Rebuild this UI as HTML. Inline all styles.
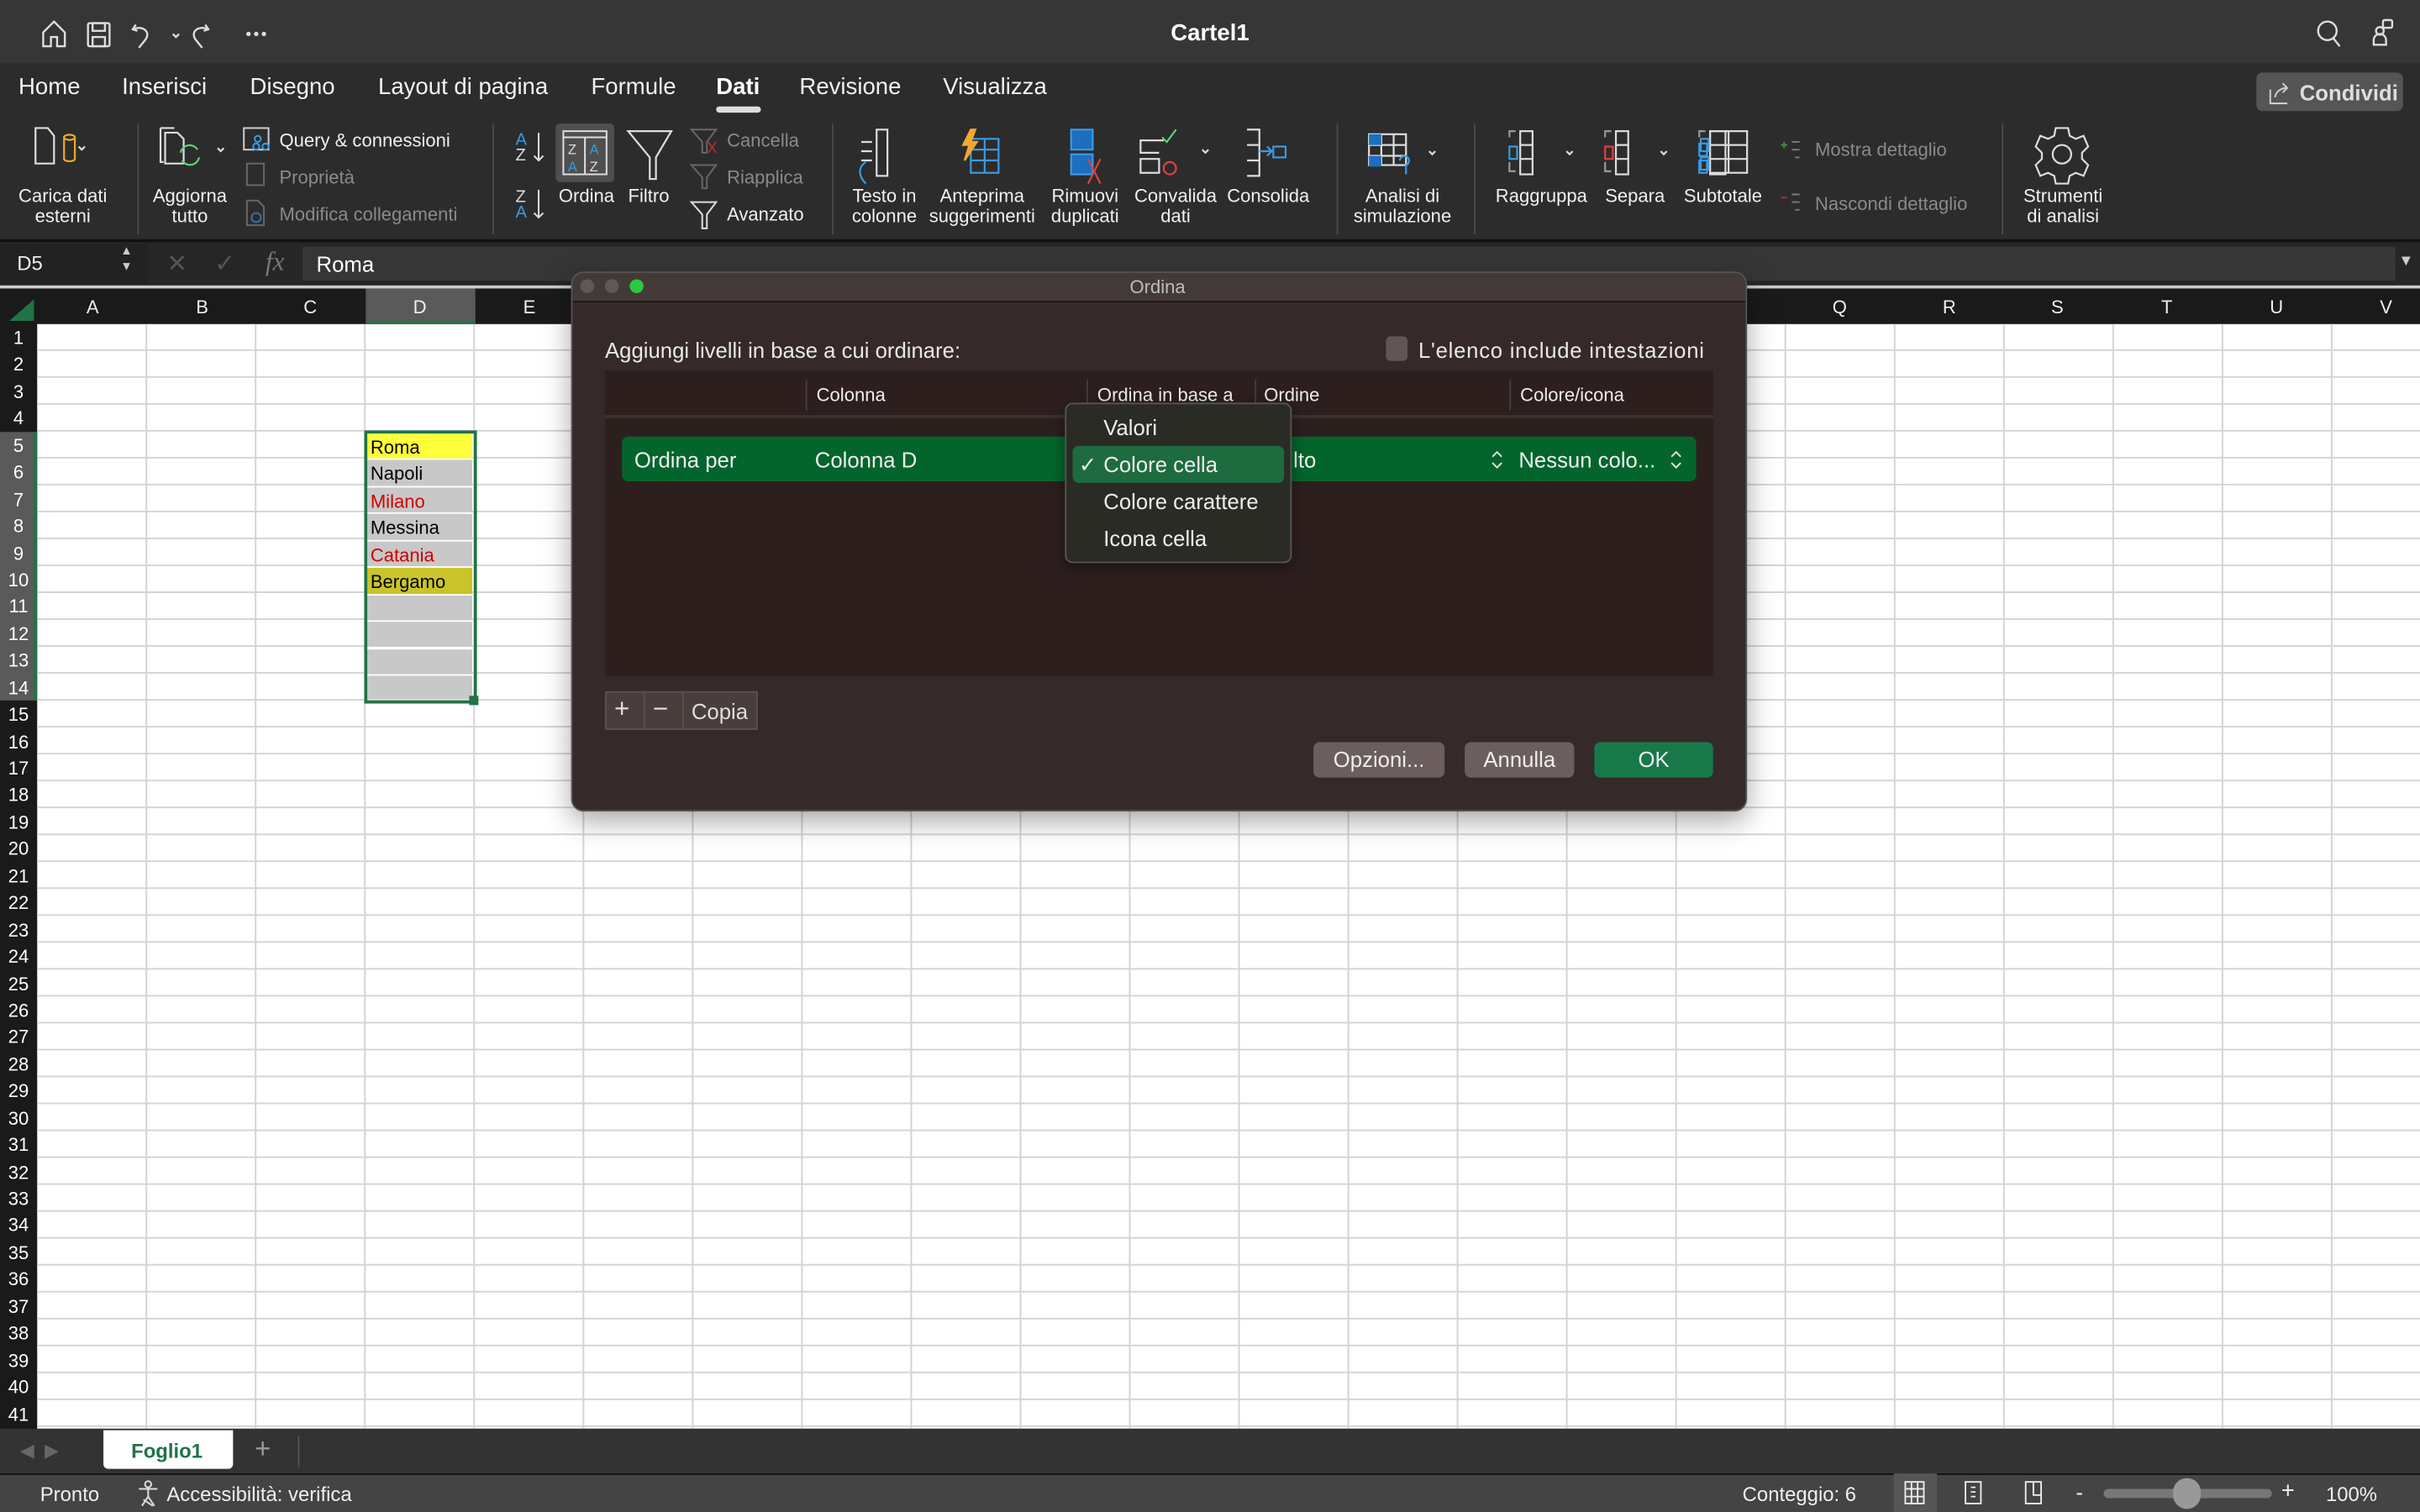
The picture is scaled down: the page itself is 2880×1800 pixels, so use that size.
<!DOCTYPE html>
<html><head><meta charset="utf-8">
<style>
html,body{margin:0;padding:0;width:2880px;height:1800px;overflow:hidden;background:#2c2c2c}
#w{position:absolute;left:0;top:0;width:1568px;height:980px;transform:scale(1.836735);transform-origin:0 0;font-family:"Liberation Sans",sans-serif;color:#eee;overflow:hidden}
.a{position:absolute}
.t{position:absolute;white-space:nowrap}
.rl{font-size:12px;color:#f0f0f0;text-align:center;line-height:13px}
.dim{color:#8a8a8a}
.sep{position:absolute;width:1px;background:#4a4a4a;top:80px;height:72px}
.tab{font-size:15px;top:48px;color:#f2f2f2}
svg{position:absolute;overflow:visible}
.col{position:absolute;top:187px;height:22px;width:70px;text-align:center;font-size:12px;line-height:24px;color:#eee}
#rows div{height:17.44px;line-height:19px;font-size:12px;text-align:center;color:#fff}
.cell{position:absolute;left:238px;width:68px;height:16.4px;font-size:12px;line-height:18px;padding-left:2px;color:#000;box-sizing:border-box}
.btn{position:absolute;background:#6b5e5c;border-radius:4px;font-size:14px;text-align:center;line-height:23px;color:#eee;height:23px}
</style></head><body><div id="w">
<div class="a" style="left:0;top:0;width:1568px;height:41px;background:#363636"></div>
<div class="t" style="left:0;width:1568px;text-align:center;top:13px;font-size:15px;font-weight:bold;color:#fff">Cartel1</div>
<svg style="left:26px;top:12px" width="160" height="20" fill="none" stroke="#ddd" stroke-width="1.3">
<path d="M2 18V9l7-7 7 7v9h-5v-6h-4v6z"/>
<rect x="31" y="3" width="14" height="15" rx="1"/><rect x="34" y="3" width="8" height="5"/><rect x="34" y="12" width="8" height="6"/>
<path d="M62 4l-2 3 3 1M60 7c7-3 12 2 8 7l-4 5"/><path d="M86 10l2 2 2-2"/>
<path d="M107 4l2 3-3 1M109 7c-7-3-12 2-8 7l4 5"/>
<circle cx="135" cy="10" r=".8" fill="#ddd"/><circle cx="140" cy="10" r=".8" fill="#ddd"/><circle cx="145" cy="10" r=".8" fill="#ddd"/>
</svg>
<svg style="left:1500px;top:12px" width="60" height="20" fill="none" stroke="#ddd" stroke-width="1.3">
<circle cx="8" cy="8" r="6"/><path d="M12 13l4 5"/>
<circle cx="42" cy="8" r="2.5"/><rect x="44" y="1" width="6" height="5" rx="1"/><path d="M38 14a4 4 0 0 1 8 0v3h-8z"/>
</svg>
<div class="t tab" style="left:12px">Home</div>
<div class="t tab" style="left:79px">Inserisci</div>
<div class="t tab" style="left:162px">Disegno</div>
<div class="t tab" style="left:245px">Layout di pagina</div>
<div class="t tab" style="left:383px">Formule</div>
<div class="t tab" style="left:464px;font-weight:bold;color:#fff">Dati</div>
<div class="a" style="left:464px;top:69px;width:29px;height:4px;border-radius:2px;background:#ddd"></div>
<div class="t tab" style="left:518px">Revisione</div>
<div class="t tab" style="left:611px">Visualizza</div>
<div class="a" style="left:1462px;top:47px;width:95px;height:25px;border-radius:4px;background:#555"></div>
<div class="t" style="left:1490px;top:52px;font-size:14px;font-weight:bold;color:#ddd">Condividi</div>
<svg style="left:1470px;top:52px" width="16" height="16" fill="none" stroke="#ccc" stroke-width="1.1"><path d="M1 6v9h11M4 11c1-4 4-6 8-6M9 2l3 3-3 3"/></svg>
<div class="sep" style="left:89px"></div><div class="sep" style="left:319px"></div><div class="sep" style="left:539px"></div>
<div class="sep" style="left:866px"></div><div class="sep" style="left:955px"></div><div class="sep" style="left:1297px"></div>
<svg style="left:20px;top:82px" width="50" height="40" fill="none" stroke="#ddd" stroke-width="1.2">
<path d="M3 1h8l4 5v18H3z"/><path d="M31 13l2 2 2-2"/>
<ellipse cx="25" cy="7" rx="3.5" ry="1.7" stroke="#f0a830"/><path d="M21.5 7v14c0 2 7 2 7 0V7" stroke="#f0a830"/>
</svg>
<div class="t rl" style="left:12px;top:121px">Carica dati<br>esterni</div>
<svg style="left:103px;top:82px" width="50" height="40" fill="none" stroke="#ddd" stroke-width="1.2">
<path d="M1 1h9M1 1v22h2M4 4h8l4 4v16H4z"/><path d="M38 14l2 2 2-2"/>
<path d="M14 17a6 6 0 0 1 11-2M26 20a6 6 0 0 1-11 2" stroke="#5ed080"/>
</svg>
<div class="t rl" style="left:99px;top:121px">Aggiorna<br>tutto</div>
<svg style="left:157px;top:82px" width="20" height="64" fill="none" stroke="#ccc" stroke-width="1.1">
<rect x="1" y="1" width="16" height="14"/><circle cx="10" cy="8" r="2" stroke="#3a9ae0"/><circle cx="9" cy="13" r="2" stroke="#3a9ae0"/><circle cx="15" cy="13" r="2" stroke="#3a9ae0"/>
<rect x="3" y="24" width="11" height="14" stroke="#666"/>
<path d="M3 48h7l4 4v12H3z" stroke="#666"/><circle cx="9" cy="59" r="3" stroke="#3a6e9e"/>
</svg>
<div class="t" style="left:181px;top:84px;font-size:12px;color:#f0f0f0">Query &amp; connessioni</div>
<div class="t dim" style="left:181px;top:108px;font-size:12px">Proprietà</div>
<div class="t dim" style="left:181px;top:132px;font-size:12px">Modifica collegamenti</div>
<div class="t" style="left:334px;top:86px;font-size:11px;line-height:10px;color:#3a9ae0">A<br><span style="color:#ddd">Z</span></div>
<div class="t" style="left:334px;top:123px;font-size:11px;line-height:10px;color:#ddd">Z<br><span style="color:#3a9ae0">A</span></div>
<svg style="left:345px;top:86px" width="10" height="60" fill="none" stroke="#ddd" stroke-width="1.1"><path d="M4 0v18M1 15l3 3 3-3M4 37v18M1 52l3 3 3-3"/></svg>
<div class="a" style="left:360px;top:80px;width:38px;height:38px;border-radius:3px;background:#4f4f4f"></div>
<svg style="left:364px;top:84px" width="30" height="32" fill="none" stroke="#ddd" stroke-width="1.1">
<rect x="1" y="1" width="28" height="28"/><path d="M1 5h28M15 5v24"/>
<text x="4" y="16" font-size="9" fill="#ddd" stroke="none" font-family="Liberation Sans">Z</text><text x="18" y="16" font-size="9" fill="#3a9ae0" stroke="none" font-family="Liberation Sans">A</text>
<text x="4" y="27" font-size="9" fill="#3a9ae0" stroke="none" font-family="Liberation Sans">A</text><text x="18" y="27" font-size="9" fill="#ddd" stroke="none" font-family="Liberation Sans">Z</text>
</svg>
<div class="t rl" style="left:362px;top:121px">Ordina</div>
<svg style="left:406px;top:84px" width="32" height="34" fill="none" stroke="#ddd" stroke-width="1.2"><path d="M1 1h28L19 18v14h-4V18z"/></svg>
<div class="t rl" style="left:407px;top:121px">Filtro</div>
<svg style="left:447px;top:83px" width="20" height="66" fill="none" stroke="#666" stroke-width="1.1">
<path d="M1 1h16l-6 8v7h-3V9z"/><path d="M12 9l5 7M17 9l-5 7" stroke="#a03030"/>
<path d="M1 24h16l-6 8v7h-3v-7z"/><path d="M1 48h16l-6 8v9h-3v-9z" stroke="#ddd"/>
</svg>
<div class="t dim" style="left:471px;top:84px;font-size:12px">Cancella</div>
<div class="t dim" style="left:471px;top:108px;font-size:12px">Riapplica</div>
<div class="t" style="left:471px;top:132px;font-size:12px;color:#f0f0f0">Avanzato</div>
<svg style="left:553px;top:83px" width="300" height="40" fill="none" stroke="#ddd" stroke-width="1.2">
<rect x="15" y="1" width="7" height="30"/><path d="M5 9h7M5 15h7M5 21h7"/><path d="M8 22c-6 4-4 10 0 14" stroke="#3a9ae0"/>
<rect x="76" y="7" width="18" height="22" stroke="#3a9ae0"/><path d="M76 14h18M76 21h18M85 7v22" stroke="#3a9ae0"/><path d="M76 1l-5 10h4l-3 10 8-12h-4l3-8z" stroke="#f0a830" fill="#f0a830"/>
<rect x="141" y="1" width="14" height="13" fill="#1c6fc0" stroke="#3a9ae0"/><rect x="141" y="17" width="14" height="13" fill="#1c6fc0" stroke="#3a9ae0"/><path d="M152 20l8 16M160 20l-8 16" stroke="#e04040"/>
<path d="M201 8h-15v8h12M186 20h12v9h-12z"/><path d="M200 6l3 3 6-8" stroke="#5ed080"/><circle cx="205" cy="26" r="4" stroke="#e04040"/><path d="M226 14l2 2 2-2"/>
<path d="M255 1h8v30h-8M255 11h8M255 21h8"/><path d="M263 15h8M268 12l3 3-3 3M272 12h8v7h-8z" stroke="#3a9ae0"/>
</svg>
<div class="t rl" style="left:552px;top:121px">Testo in<br>colonne</div>
<div class="t rl" style="left:602px;top:121px">Anteprima<br>suggerimenti</div>
<div class="t rl" style="left:681px;top:121px">Rimuovi<br>duplicati</div>
<div class="t rl" style="left:735px;top:121px">Convalida<br>dati</div>
<div class="t rl" style="left:795px;top:121px">Consolida</div>
<svg style="left:886px;top:86px" width="50" height="36" fill="none" stroke="#ddd" stroke-width="1.2">
<rect x="1" y="1" width="24" height="20"/><path d="M1 8h24M1 15h24M9 1v20M17 1v20"/><rect x="1" y="1" width="8" height="7" fill="#1c6fc0" stroke="none"/><rect x="1" y="15" width="8" height="7" fill="#1c6fc0" stroke="none"/>
<path d="M21 18a3 3 0 1 1 4 3v6" stroke="#3a9ae0"/><path d="M40 12l2 2 2-2"/>
</svg>
<div class="t rl" style="left:877px;top:121px">Analisi di<br>simulazione</div>
<svg style="left:977px;top:84px" width="130" height="36" fill="none" stroke="#ddd" stroke-width="1.2">
<path d="M1 5V1h4M1 21v6h4" stroke="#999"/><rect x="8" y="1" width="8" height="28"/><path d="M8 10h8M8 19h8"/><rect x="1" y="11" width="5" height="8" stroke="#3a9ae0"/><path d="M38 14l2 2 2-2"/>
<path d="M63 5V1h4M63 21v6h4" stroke="#999"/><rect x="70" y="1" width="8" height="28"/><path d="M70 10h8M70 19h8"/><rect x="63" y="11" width="5" height="8" stroke="#e04040"/><path d="M99 14l2 2 2-2"/>
<path d="M124 5V1h4" stroke="#999"/><rect x="131" y="1" width="10" height="28"/><rect x="124" y="9" width="5" height="8" stroke="#3a9ae0"/><rect x="124" y="20" width="5" height="8" stroke="#3a9ae0"/>
</svg>
<svg style="left:1101px;top:84px" width="34" height="30" fill="none" stroke="#ddd" stroke-width="1.2"><rect x="7" y="1" width="24" height="27"/><path d="M7 10h24M7 19h24M19 1v27"/><rect x="1" y="6" width="5" height="8" stroke="#3a9ae0"/><rect x="1" y="18" width="5" height="8" stroke="#3a9ae0"/></svg>
<div class="t rl" style="left:969px;top:121px">Raggruppa</div>
<div class="t rl" style="left:1040px;top:121px">Separa</div>
<div class="t rl" style="left:1091px;top:121px">Subtotale</div>
<svg style="left:1153px;top:90px" width="20" height="50" fill="none" stroke="#777" stroke-width="1.1"><path d="M1 4h4M3 2v4" stroke="#4a8a4a"/><path d="M8 2h5M8 7h5M10 12h3"/><path d="M1 38h4" stroke="#a03030"/><path d="M8 36h5M8 41h5M10 46h3"/></svg>
<div class="t dim" style="left:1176px;top:90px;font-size:12px">Mostra dettaglio</div>
<div class="t dim" style="left:1176px;top:125px;font-size:12px">Nascondi dettaglio</div>
<svg style="left:1320px;top:82px" width="34" height="36" fill="none" stroke="#ddd" stroke-width="1.2"><path d="M12 1h8l1 5 4 2 5-2 3 7-4 4v4l4 4-3 7-5-2-4 2-1 5h-8l-1-5-4-2-5 2-3-7 4-4v-4l-4-4 3-7 5 2 4-2z"/><circle cx="16" cy="18" r="6"/></svg>
<div class="t rl" style="left:1311px;top:121px">Strumenti<br>di analisi</div>
<div class="a" style="left:0;top:155px;width:1568px;height:2px;background:#111"></div>
<div class="a" style="left:0;top:157px;width:1568px;height:28px;background:#262626"></div>
<div class="a" style="left:0;top:158px;width:96px;height:26px;background:#222"></div>
<div class="t" style="left:11px;top:163px;font-size:13px;color:#eee">D5</div>
<div class="t" style="left:78px;top:158px;font-size:8px;color:#ccc;line-height:10px">▲<br>▼</div>
<div class="t" style="left:108px;top:161px;font-size:16px;color:#555">✕</div>
<div class="t" style="left:139px;top:161px;font-size:16px;color:#555">✓</div>
<div class="t" style="left:172px;top:160px;font-size:17px;color:#777;font-family:'Liberation Serif',serif;font-style:italic">fx</div>
<div class="a" style="left:196px;top:160px;width:1356px;height:22px;background:#363636"></div>
<div class="t" style="left:205px;top:163px;font-size:14px;color:#fff">Roma</div>
<div class="t" style="left:1554px;top:164px;font-size:10px;color:#ccc">▼</div>
<div class="a" style="left:0;top:185px;width:1568px;height:2px;background:#ccc"></div>
<div class="a" style="left:24px;top:210px;width:1544px;height:716px;background-color:#fff;background-image:linear-gradient(to right,#d4d4d4 1px,transparent 1px),linear-gradient(to bottom,transparent 16.4px,#d4d4d4 16.4px);background-size:70.8px 17.44px;background-position:-0.5px 0"></div>
<div class="a" style="left:0;top:187px;width:1568px;height:23px;background:#1a1a1a"></div>
<svg style="left:6px;top:194px" width="16" height="14"><path d="M16 0V14H0z" fill="#217346"/></svg>
<div class="a" style="left:237px;top:187px;width:71px;height:23px;background:#5a5a5a;border-bottom:2px solid #217346;box-sizing:border-box"></div>
<div class="col" style="left:25px">A</div><div class="col" style="left:96px">B</div><div class="col" style="left:166px">C</div><div class="col" style="left:237px">D</div><div class="col" style="left:308px">E</div>
<div class="col" style="left:1157px">Q</div><div class="col" style="left:1228px">R</div><div class="col" style="left:1298px">S</div><div class="col" style="left:1369px">T</div><div class="col" style="left:1440px">U</div><div class="col" style="left:1511px">V</div>
<div class="a" style="left:0;top:210px;width:24px;height:716px;background:#1a1a1a"></div>
<div class="a" style="left:0;top:279.8px;width:22px;height:174.4px;background:#5a5a5a;border-right:2px solid #217346"></div>
<div id="rows" class="a" style="left:0;top:210px;width:24px">
<div>1</div><div>2</div><div>3</div><div>4</div><div>5</div><div>6</div><div>7</div><div>8</div><div>9</div><div>10</div><div>11</div><div>12</div><div>13</div><div>14</div><div>15</div><div>16</div><div>17</div><div>18</div><div>19</div><div>20</div><div>21</div><div>22</div><div>23</div><div>24</div><div>25</div><div>26</div><div>27</div><div>28</div><div>29</div><div>30</div><div>31</div><div>32</div><div>33</div><div>34</div><div>35</div><div>36</div><div>37</div><div>38</div><div>39</div><div>40</div><div>41</div>
</div>
<div class="cell" style="top:281px;background:#ffff3b">Roma</div>
<div class="cell" style="top:298.4px;background:#c8c8c8">Napoli</div>
<div class="cell" style="top:315.9px;background:#c8c8c8;color:#d00000">Milano</div>
<div class="cell" style="top:333.3px;background:#c8c8c8">Messina</div>
<div class="cell" style="top:350.8px;background:#c8c8c8;color:#d00000">Catania</div>
<div class="cell" style="top:368.2px;background:#c9c42a">Bergamo</div>
<div class="cell" style="top:385.6px;background:#c8c8c8"></div>
<div class="cell" style="top:403.1px;background:#c8c8c8"></div>
<div class="cell" style="top:420.5px;background:#c8c8c8"></div>
<div class="cell" style="top:438px;background:#c8c8c8;height:15px"></div>
<div class="a" style="left:235.5px;top:279px;width:73px;height:177px;border:2px solid #217346;box-sizing:border-box"></div>
<div class="a" style="left:304px;top:451px;width:6px;height:6px;background:#217346"></div>
<div class="a" style="left:0;top:926px;width:1568px;height:29px;background:#333"></div>
<div class="t" style="left:13px;top:933px;font-size:12px;color:#666">◀ &nbsp;▶</div>
<div class="a" style="left:67px;top:927px;width:84px;height:25px;background:#fff;border-radius:0 0 3px 3px"></div>
<div class="t" style="left:85px;top:933px;font-size:13px;font-weight:bold;color:#217346">Foglio1</div>
<div class="t" style="left:165px;top:929px;font-size:18px;color:#999">+</div>
<div class="a" style="left:193px;top:931px;width:1px;height:20px;background:#555"></div>
<div class="a" style="left:0;top:955px;width:1568px;height:1px;background:#111"></div>
<div class="a" style="left:0;top:956px;width:1568px;height:24px;background:#444"></div>
<div class="t" style="left:26px;top:961px;font-size:13px;color:#eee">Pronto</div>
<svg style="left:88px;top:959px" width="16" height="18" fill="none" stroke="#ddd" stroke-width="1.1"><circle cx="8" cy="3" r="2"/><path d="M2 6h12M8 6v5M8 11l-4 6M8 11l4 6M5 13l6 4"/></svg>
<div class="t" style="left:108px;top:961px;font-size:13px;color:#eee">Accessibilità: verifica</div>
<div class="t" style="left:1129px;top:961px;font-size:13px;color:#eee">Conteggio: 6</div>
<div class="a" style="left:1227px;top:955px;width:28px;height:25px;background:#555"></div>
<svg style="left:1234px;top:960px" width="100" height="16" fill="none" stroke="#eee" stroke-width="1"><rect x="0.5" y="0.5" width="12" height="14"/><path d="M4.5 1v14M8.5 1v14M1 5h12M1 10h12"/><rect x="39.5" y="0.5" width="10" height="14"/><path d="M43 4h3M43 7h3M43 10h3"/><rect x="78.5" y="0.5" width="10" height="14"/><path d="M83.5 1v8h5"/></svg>
<div class="t" style="left:1345px;top:959px;font-size:14px;color:#eee">-</div>
<div class="a" style="left:1363px;top:965px;width:109px;height:6px;border-radius:3px;background:#777"></div>
<div class="a" style="left:1408px;top:958px;width:18px;height:20px;border-radius:9px;background:#999"></div>
<div class="t" style="left:1478px;top:958px;font-size:15px;color:#eee">+</div>
<div class="t" style="left:1507px;top:961px;font-size:13px;color:#eee">100%</div>
<div class="a" style="left:370px;top:176px;width:762px;height:350px;border-radius:8px;background:#35292a;border:1px solid #555;box-sizing:border-box;box-shadow:0 6px 18px rgba(0,0,0,.35)"></div>
<div class="a" style="left:371px;top:177px;width:760px;height:18px;border-radius:7px 7px 0 0;background:#433a38;border-bottom:1px solid #1e1616"></div>
<div class="a" style="left:376px;top:181px;width:9px;height:9px;border-radius:5px;background:#5f5857"></div>
<div class="a" style="left:392px;top:181px;width:9px;height:9px;border-radius:5px;background:#5f5857"></div>
<div class="a" style="left:408px;top:181px;width:9px;height:9px;border-radius:5px;background:#2bc840"></div>
<div class="t" style="left:732px;top:179px;font-size:12px;color:#bbb">Ordina</div>
<div class="t" style="left:392px;top:219px;font-size:14px;color:#e8e8e8">Aggiungi livelli in base a cui ordinare:</div>
<div class="a" style="left:898px;top:218px;width:14px;height:16px;border-radius:3px;background:#5f5655"></div>
<div class="t" style="left:919px;top:219px;font-size:14px;letter-spacing:0.4px;color:#e8e8e8">L'elenco include intestazioni</div>
<div class="a" style="left:392px;top:240px;width:718px;height:198px;background:#2d1f1e"></div>
<div class="a" style="left:392px;top:269px;width:718px;height:2px;background:#3e3231"></div>
<div class="a" style="left:522px;top:246px;width:1px;height:20px;background:#4a3e3d"></div>
<div class="a" style="left:704px;top:246px;width:1px;height:20px;background:#4a3e3d"></div>
<div class="a" style="left:813px;top:246px;width:1px;height:20px;background:#4a3e3d"></div>
<div class="a" style="left:978px;top:246px;width:1px;height:20px;background:#4a3e3d"></div>
<div class="t" style="left:529px;top:249px;font-size:12px;color:#eee">Colonna</div>
<div class="t" style="left:711px;top:249px;font-size:12px;color:#eee">Ordina in base a</div>
<div class="t" style="left:819px;top:249px;font-size:12px;color:#eee">Ordine</div>
<div class="t" style="left:985px;top:249px;font-size:12px;color:#eee">Colore/icona</div>
<div class="a" style="left:403px;top:283px;width:696px;height:29px;border-radius:4px;background:#04652c"></div>
<div class="t" style="left:411px;top:290px;font-size:14px;color:#eee">Ordina per</div>
<div class="t" style="left:528px;top:290px;font-size:14px;color:#eee">Colonna D</div>
<div class="t" style="left:838px;top:290px;font-size:14px;color:#eee">lto</div>
<div class="t" style="left:984px;top:290px;font-size:14px;color:#eee">Nessun colo...</div>
<svg style="left:964px;top:291px" width="130" height="14" fill="none" stroke="#ddd" stroke-width="1.1"><path d="M3 5l3-3 3 3M3 9l3 3 3-3M119 5l3-3 3 3M119 9l3 3 3-3"/></svg>
<div class="a" style="left:690px;top:261px;width:147px;height:104px;border-radius:5px;background:#2a2b25;border:1px solid #555;box-sizing:border-box;box-shadow:0 3px 10px rgba(0,0,0,.4)"></div>
<div class="a" style="left:695px;top:289px;width:137px;height:24px;border-radius:4px;background:#1f6b40"></div>
<div class="t" style="left:715px;top:269px;font-size:14px;color:#eee">Valori</div>
<div class="t" style="left:699px;top:293px;font-size:14px;color:#eee">✓</div>
<div class="t" style="left:715px;top:293px;font-size:14px;color:#eee">Colore cella</div>
<div class="t" style="left:715px;top:317px;font-size:14px;color:#eee">Colore carattere</div>
<div class="t" style="left:715px;top:341px;font-size:14px;color:#eee">Icona cella</div>
<div class="a" style="left:392px;top:448px;width:99px;height:25px;background:#4a3e3c;border:1px solid #5c504e;box-sizing:border-box"></div>
<div class="a" style="left:417px;top:448px;width:1px;height:25px;background:#5c504e"></div>
<div class="a" style="left:442px;top:448px;width:1px;height:25px;background:#5c504e"></div>
<div class="t" style="left:398px;top:450px;font-size:17px;color:#ddd">+</div>
<div class="t" style="left:423px;top:450px;font-size:17px;color:#ddd">−</div>
<div class="t" style="left:448px;top:453px;font-size:14px;color:#ddd">Copia</div>
<div class="btn" style="left:851px;top:481px;width:85px">Opzioni...</div>
<div class="btn" style="left:949px;top:481px;width:71px">Annulla</div>
<div class="btn" style="left:1033px;top:481px;width:77px;background:#17794a">OK</div>
</div></body></html>
